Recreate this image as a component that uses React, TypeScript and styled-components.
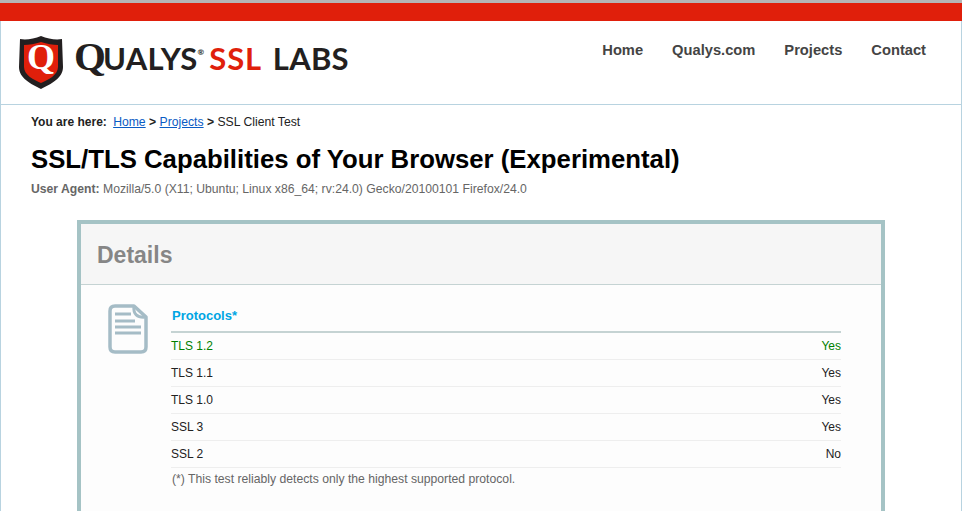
import React from "react";
import styled, { createGlobalStyle } from "styled-components";

const Global = createGlobalStyle`
  html, body { margin: 0; padding: 0; background: #fff; }
  body { font-family: "Liberation Sans", Arial, sans-serif; overflow: hidden; }
`;

const Page = styled.div`
  width: 962px;
  height: 511px;
  box-sizing: border-box;
  overflow: hidden;
  background: #fff;
  border-top: 3px solid #b5b5b5;
`;

const RedBar = styled.div`
  height: 18px;
  background: #e01f0b;
`;

const Frame = styled.div`
  height: 490px;
  border-left: 1px solid #b8d3e0;
  border-right: 1px solid #b8d3e0;
  overflow: hidden;
`;

const Header = styled.header`
  height: 83px;
  border-bottom: 1px solid #b8d3e0;
  display: flex;
  justify-content: space-between;
`;

const Logo = styled.div`
  display: flex;
  align-items: flex-start;
  padding: 15px 0 0 17px;
`;

const LogoText = styled.div`
  font-family: "Lato", "Open Sans", sans-serif;
  font-size: 31px;
  line-height: 40px;
  color: #231f20;
  margin-left: 10px;
  white-space: nowrap;
  font-weight: 700;
  letter-spacing: 0.2px;
`;

const BigQ = styled.span`
  font-family: "Liberation Serif", serif;
  font-size: 41px;
  margin-right: -3px;
`;

const Reg = styled.sup`
  font-size: 8px;
  line-height: 0;
  vertical-align: 15px;
  margin-right: 5px;
`;

const Red = styled.span`
  color: #e01f0b;
  letter-spacing: 0.8px;
  margin-right: 11px;
`;

const Nav = styled.nav`
  display: flex;
  gap: 29px;
  padding: 20px 35px 0 0;
`;

const NavLink = styled.a`
  font-size: 14.7px;
  line-height: 18px;
  font-weight: 700;
  color: #444;
`;

const Content = styled.main`
  padding: 10px 0 0 30px;
`;

const Crumbs = styled.div`
  font-size: 12.2px;
  line-height: 14px;
  color: #222;
`;

const CrumbLabel = styled.b`
  font-size: 12px;
  margin-right: 3px;
`;

const CrumbLink = styled.a`
  color: #0a5bc4;
  text-decoration: underline;
`;

const Title = styled.h1`
  margin: 15px 0 0;
  font-size: 25.75px;
  line-height: 30px;
  font-weight: 700;
  color: #000;
`;

const Agent = styled.div`
  margin-top: 8px;
  font-size: 12.2px;
  line-height: 14px;
  color: #666;
`;

const Card = styled.section`
  width: 808px;
  box-sizing: border-box;
  margin: 24px 0 0 46px;
  height: 300px;
  border: 4px solid #a5c3c5;
  background: #fdfdfd;
`;

const CardHead = styled.div`
  height: 61px;
  box-sizing: border-box;
  background: #f6f6f6;
  border-bottom: 1px solid #c5d3d3;
  padding: 17px 0 0 16px;
  font-size: 23px;
  line-height: 28px;
  font-weight: 700;
  color: #868686;
`;

const CardBody = styled.div`
  display: flex;
  padding: 19px 40px 0 27px;
`;

const IconBox = styled.div`
  width: 40px;
  flex: none;
  margin-right: 23px;
`;

const Details = styled.div`
  flex: 1;
`;

const SectionTitle = styled.div`
  box-sizing: border-box;
  padding: 4px 0 0 1px;
  height: 29px;
  font-size: 13px;
  line-height: 15px;
  font-weight: 700;
  color: #00a5e3;
  border-bottom: 2px solid #c5d3d3;
`;

const Row = styled.div<{ $good?: boolean }>`
  box-sizing: border-box;
  height: 27px;
  border-bottom: 1px solid #eeeeee;
  display: flex;
  justify-content: space-between;
  align-items: center;
  font-size: 12px;
  color: ${(p) => (p.$good ? "#008000" : "#222")};
`;

const Note = styled.div`
  margin-top: 4px;
  padding-left: 1px;
  font-size: 12.2px;
  line-height: 14px;
  color: #666;
`;

const rows = [
  { name: "TLS 1.2", value: "Yes", good: true },
  { name: "TLS 1.1", value: "Yes" },
  { name: "TLS 1.0", value: "Yes" },
  { name: "SSL 3", value: "Yes" },
  { name: "SSL 2", value: "No" },
];

function Shield() {
  return (
    <svg width="46" height="53" viewBox="0 0 46 53">
      <path d="M23 0 C30 3 38 4 44 3 L45 31 C45 42 33 48 23 53 C13 48 1 42 1 31 L2 3 C8 4 16 3 23 0 Z" fill="#231f20" />
      <path d="M23 6 C29 8 35 9 40 9 L40 31 C40 39 30 44 23 47 C16 44 6 39 6 31 L6 9 C11 9 17 8 23 6 Z" fill="#e01f0b" />
      <text x="23" y="33" textAnchor="middle" fontFamily="Liberation Serif, serif" fontWeight="700" fontSize="36" fill="#fff">
        Q
      </text>
    </svg>
  );
}

function DocIcon() {
  return (
    <svg width="40" height="50" viewBox="0 0 40 50" fill="none" stroke="#a5bcc6">
      <path d="M26 2 H7 C3.500 2 2 3.500 2 7 V43 C2 46.500 3.500 48 7 48 H33 C36.500 48 38 46.500 38 43 V13 Z" strokeWidth="3.5" strokeLinejoin="round" />
      <path d="M26 2 C25 10 29 14 38 13" strokeWidth="3" />
      <path d="M7 10 H23 M7 17 H27 M7 23 H33 M7 29 H33" strokeWidth="2.8" />
    </svg>
  );
}

export default function App() {
  return (
    <Page>
      <Global />
      <RedBar />
      <Frame>
        <Header>
          <Logo>
            <Shield />
            <LogoText>
              <BigQ>Q</BigQ>UALYS<Reg>®</Reg>
              <Red>SSL</Red>LABS
            </LogoText>
          </Logo>
          <Nav>
            <NavLink>Home</NavLink>
            <NavLink>Qualys.com</NavLink>
            <NavLink>Projects</NavLink>
            <NavLink>Contact</NavLink>
          </Nav>
        </Header>
        <Content>
          <Crumbs>
            <CrumbLabel>You are here: </CrumbLabel>
            <CrumbLink>Home</CrumbLink> <b>&gt;</b> <CrumbLink>Projects</CrumbLink> <b>&gt;</b> SSL Client Test
          </Crumbs>
          <Title>SSL/TLS Capabilities of Your Browser (Experimental)</Title>
          <Agent>
            <b>User Agent:</b> Mozilla/5.0 (X11; Ubuntu; Linux x86_64; rv:24.0) Gecko/20100101 Firefox/24.0
          </Agent>
          <Card>
            <CardHead>Details</CardHead>
            <CardBody>
              <IconBox>
                <DocIcon />
              </IconBox>
              <Details>
                <SectionTitle>Protocols*</SectionTitle>
                {rows.map((r) => (
                  <Row key={r.name} $good={r.good}>
                    <span>{r.name}</span>
                    <span>{r.value}</span>
                  </Row>
                ))}
                <Note>(*) This test reliably detects only the highest supported protocol.</Note>
              </Details>
            </CardBody>
          </Card>
        </Content>
      </Frame>
    </Page>
  );
}
